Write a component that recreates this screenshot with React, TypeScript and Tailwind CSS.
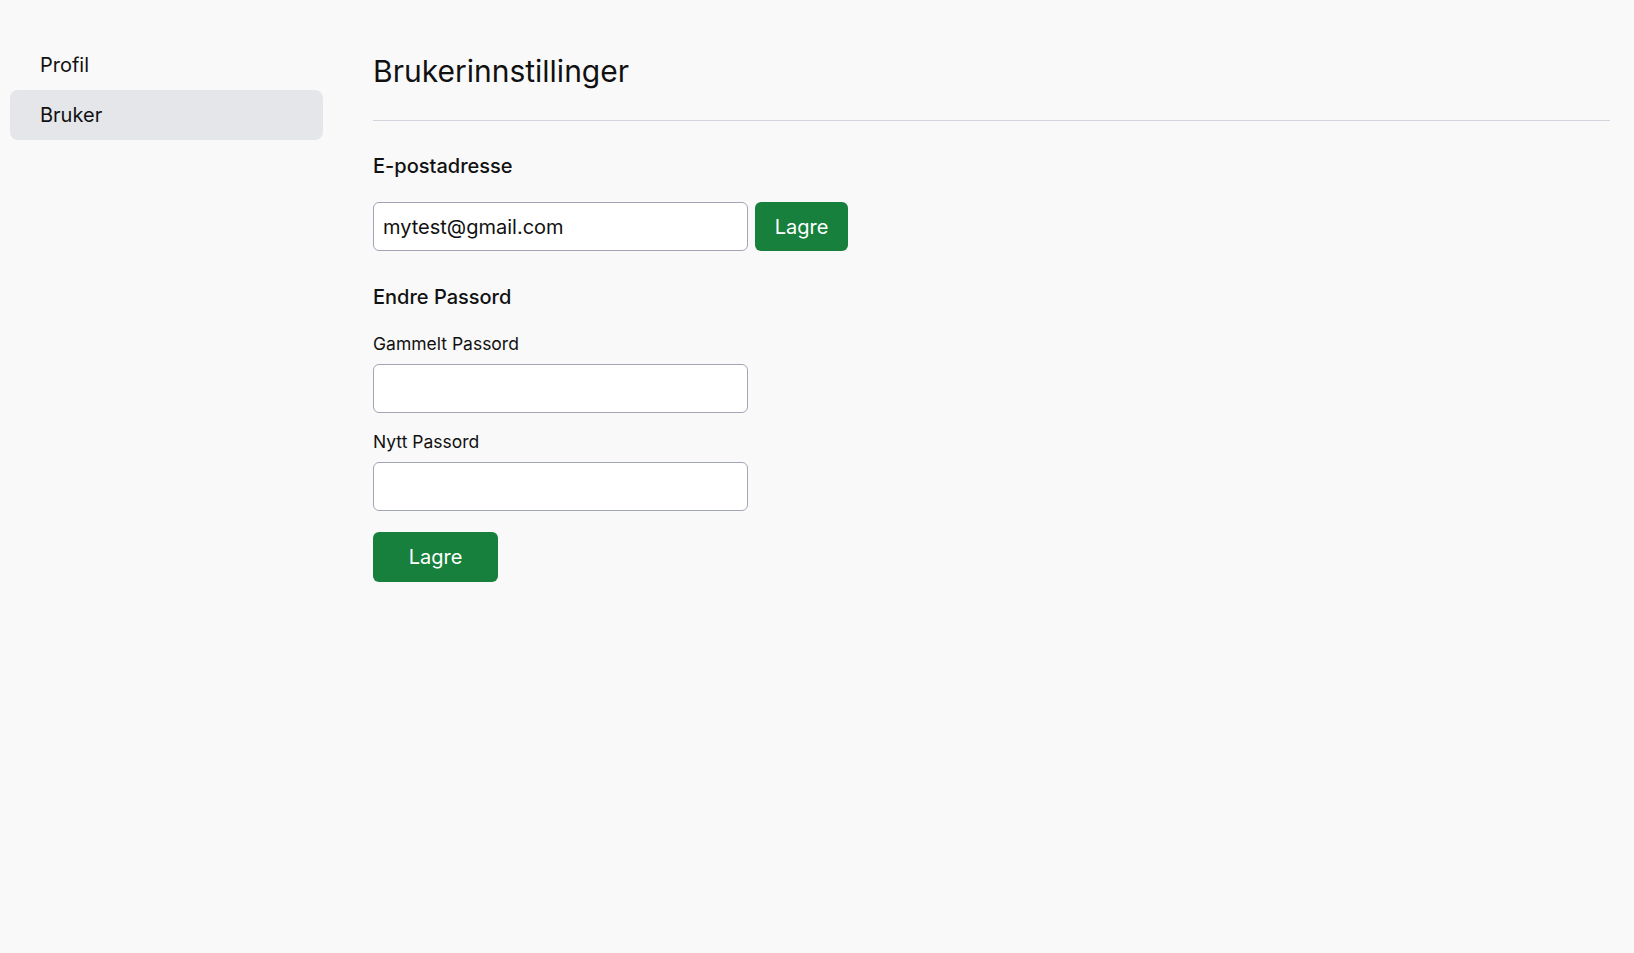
import React from "react";

export default function App() {
  return (
    <div
      className="min-h-[953px] w-full bg-[#f9f9f9] text-[#111111] flex"
      style={{ fontFamily: "Inter, 'Noto Sans', sans-serif" }}
    >
      <aside className="w-[333px] shrink-0 px-[10px] pt-[40px]">
        <nav className="flex flex-col">
          <div className="h-[50px] flex items-center px-[30px] rounded-[8px] text-[20px] leading-[28px]">
            Profil
          </div>
          <div className="h-[50px] flex items-center px-[30px] rounded-[8px] bg-[#e5e6ea] text-[20px] leading-[28px]">
            Bruker
          </div>
        </nav>
      </aside>
      <main className="flex-1 pl-[40px] pr-[24px] pt-[53px]">
        <h1 className="text-[30px] leading-[36px] font-normal">Brukerinnstillinger</h1>
        <div className="mt-[31px] h-px bg-[#d3d5de]" />
        <h2 className="mt-[31px] text-[20px] leading-[28px] font-medium">E-postadresse</h2>
        <div className="mt-[22px] flex items-center gap-[7px]">
          <input
            type="email"
            defaultValue="mytest@gmail.com"
            className="w-[375px] h-[49px] rounded-[6px] border border-[#a2a5b4] bg-white px-[9px] text-[20px] text-[#111111] outline-none"
          />
          <button className="w-[93px] h-[49px] rounded-[6px] bg-[#17803d] text-white text-[20px]">
            Lagre
          </button>
        </div>
        <h2 className="mt-[32px] text-[20px] leading-[28px] font-medium">Endre Passord</h2>
        <label className="block mt-[20px] text-[17.5px] leading-[26px]">Gammelt Passord</label>
        <input
          type="password"
          className="block mt-[7px] w-[375px] h-[49px] rounded-[6px] border border-[#a2a5b4] bg-white px-[9px] text-[20px] outline-none"
        />
        <label className="block mt-[16px] text-[17.5px] leading-[26px]">Nytt Passord</label>
        <input
          type="password"
          className="block mt-[7px] w-[375px] h-[49px] rounded-[6px] border border-[#a2a5b4] bg-white px-[9px] text-[20px] outline-none"
        />
        <button className="mt-[21px] w-[125px] h-[50px] rounded-[6px] bg-[#17803d] text-white text-[20px]">
          Lagre
        </button>
      </main>
    </div>
  );
}
